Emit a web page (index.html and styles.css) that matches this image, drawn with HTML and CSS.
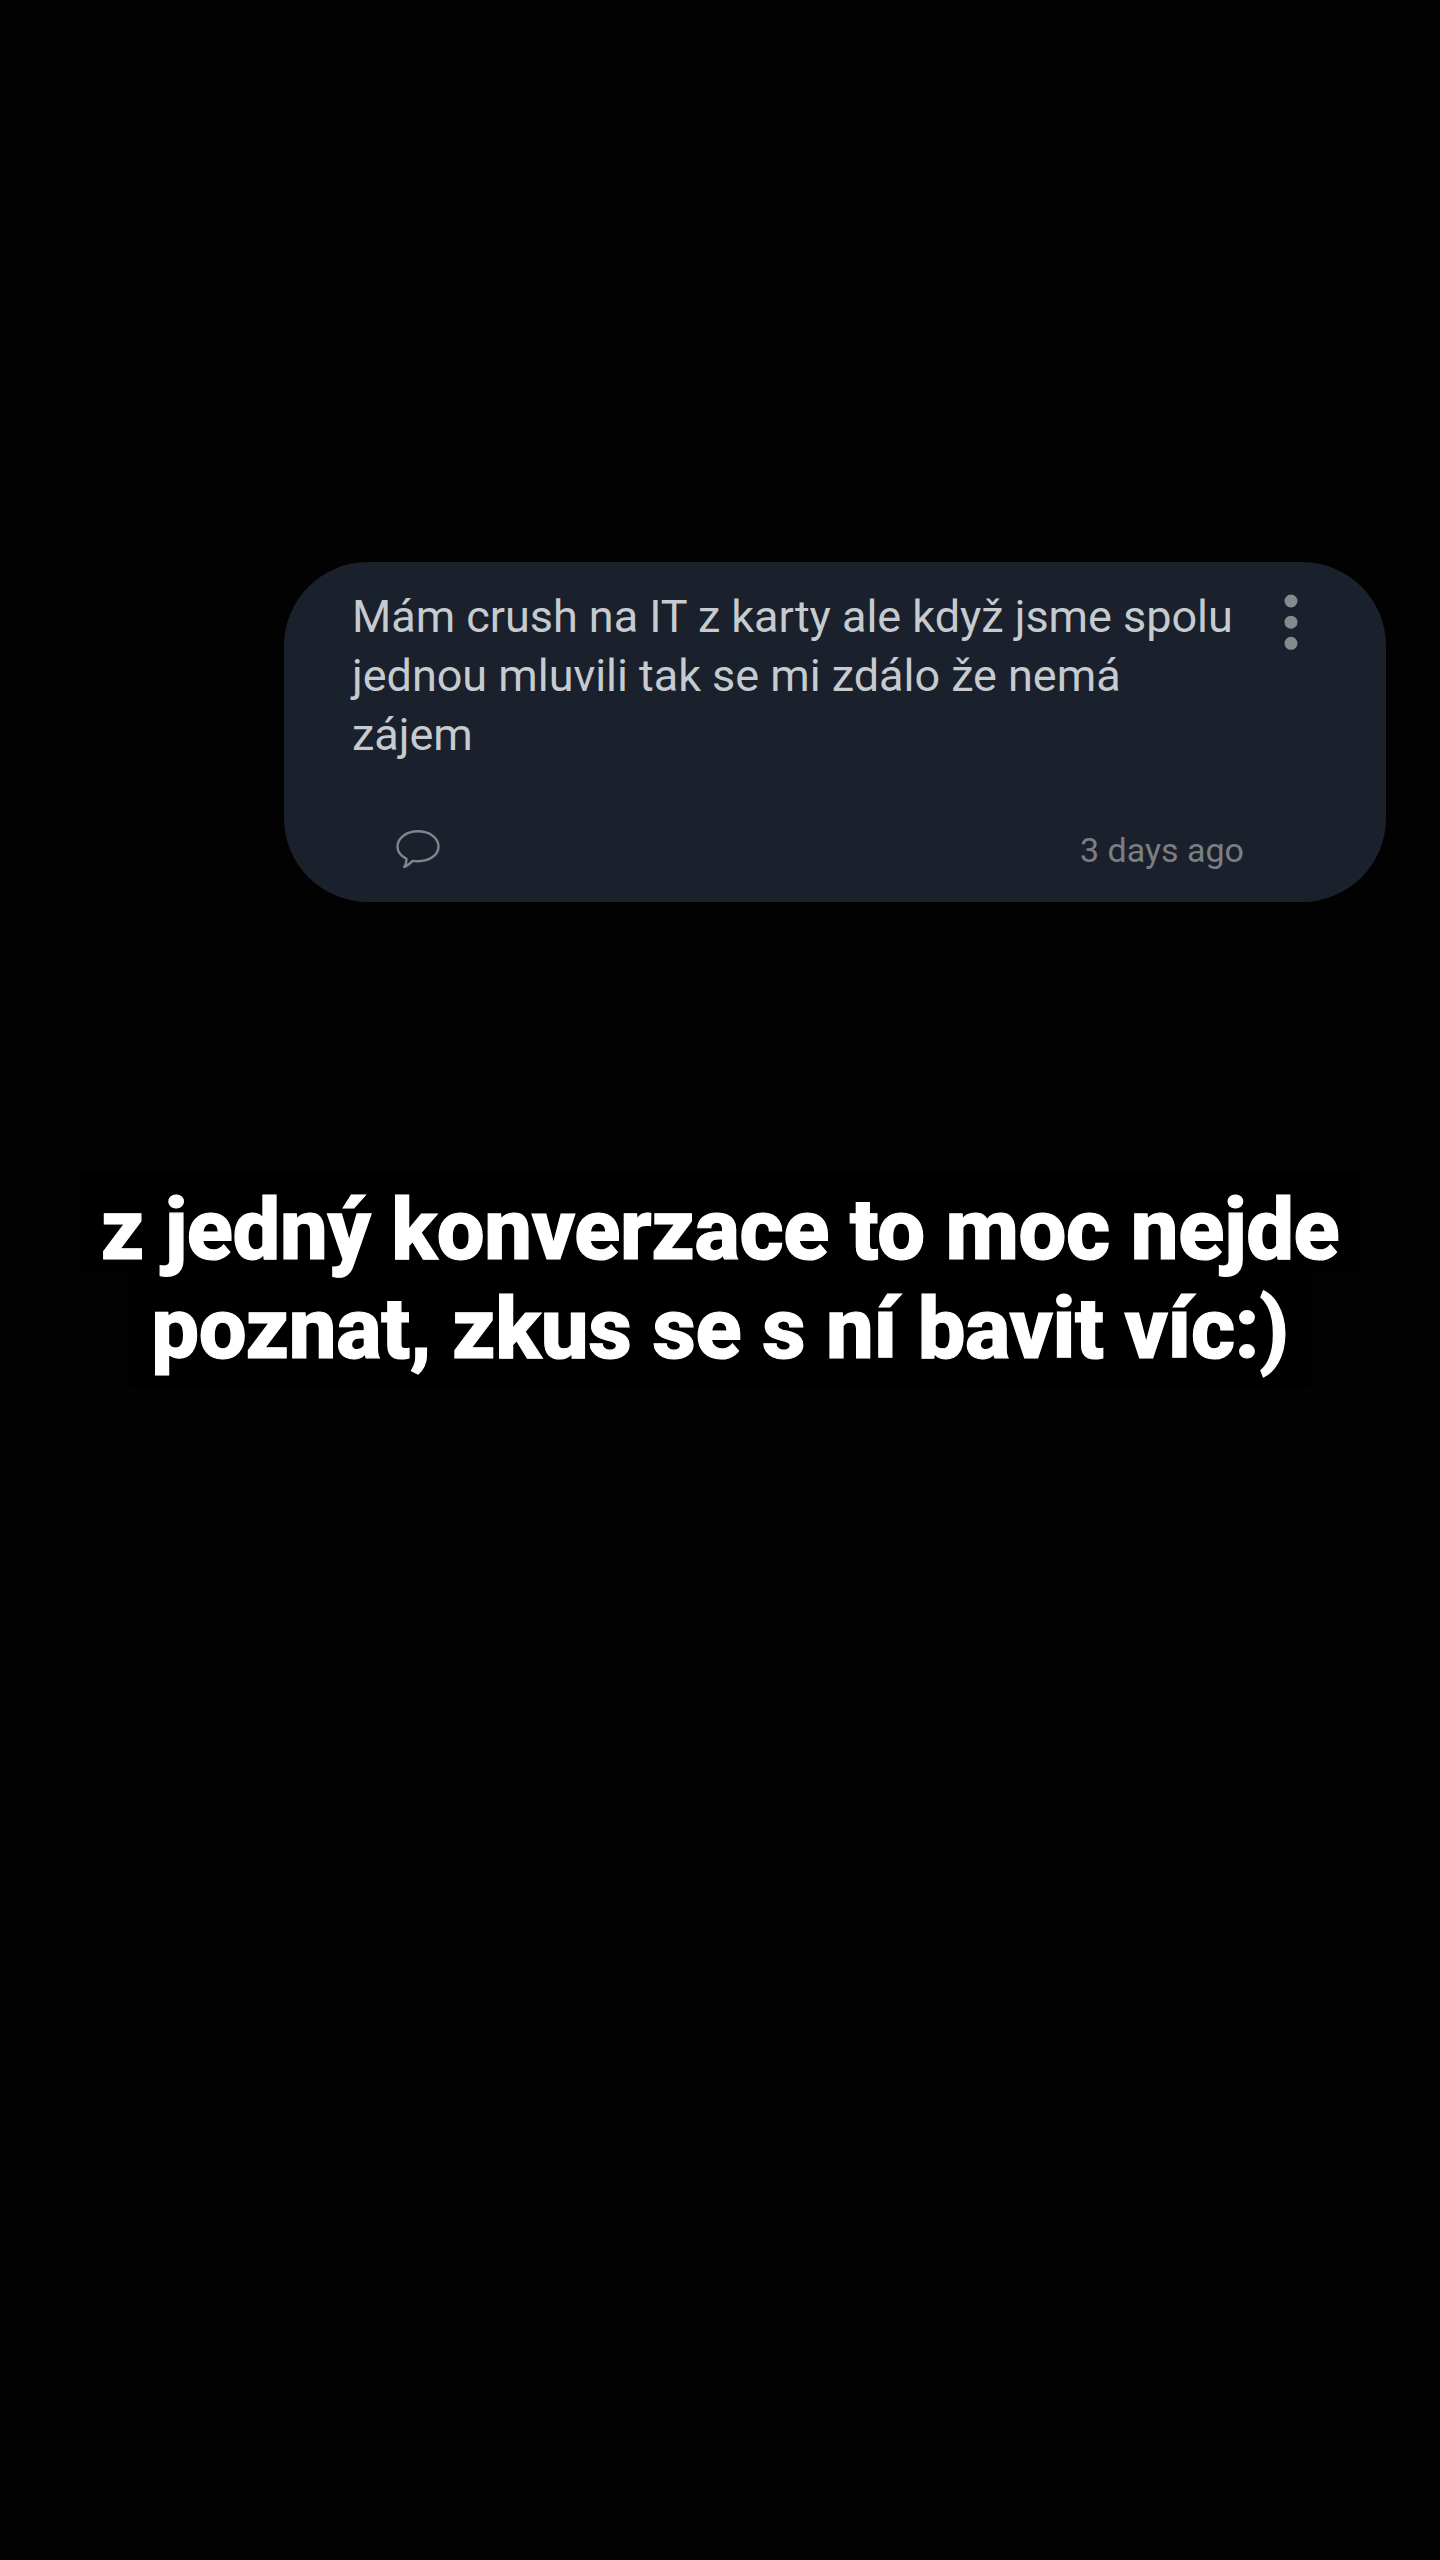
FILE: index.html
```html
<!DOCTYPE html>
<html lang="cs">
<head>
<meta charset="utf-8">
<title>Story</title>
<link rel="stylesheet" href="styles.css">
</head>
<body>
<main class="story">
  <article class="card">
    <div class="card-top">
      <p class="message">Mám crush na IT z karty ale když jsme spolu<br>jednou mluvili tak se mi zdálo že nemá<br>zájem</p>
      <svg class="more" width="14" height="56" viewBox="0 0 14 56" fill="#858a8d">
        <circle cx="7" cy="7" r="6.5"/><circle cx="7" cy="28.2" r="6.5"/><circle cx="7" cy="49.3" r="6.5"/>
      </svg>
    </div>
    <footer class="card-bottom">
      <svg class="comment" width="44" height="40" viewBox="0 0 44 40" fill="none" stroke="#80858b" stroke-width="2.4" stroke-linejoin="round">
        <path d="M10.5 28.8C4.800 26 1.500 21.500 1.500 16.500C1.500 8 10.500 1.300 22 1.300S42.500 8 42.500 16.500S33.500 31.200 22 31.200Q19 31.200 16.500 30.900C14 33.500 11.500 36 8.300 37C10 34.500 10.600 31.500 10.500 28.800Z"/>
      </svg>
      <time class="age">3 days ago</time>
    </footer>
  </article>
  <div class="reply">
    <p class="reply-line">z jedný konverzace to moc nejde</p>
    <p class="reply-line">poznat, zkus se s ní bavit víc:)</p>
  </div>
</main>
</body>
</html>
```
FILE: styles.css
```css
* { box-sizing: border-box; }
body { margin: 0; background: #020203; font-family: Roboto, sans-serif; }
p { margin: 0; }
svg { display: block; flex: none; }
.story { display: flex; flex-direction: column; align-items: center; height: 2560px; padding-top: 562px; }
.card {
  display: flex; flex-direction: column; justify-content: space-between;
  align-self: flex-start; width: 1102px; height: 340px; margin-left: 284px;
  padding: 25px 88px 30px 67px; border-radius: 84px; background: #1b212c; color: #c6cbd0;
}
.card-top { display: flex; justify-content: space-between; }
.message { padding-left: 1px; font-size: 45px; line-height: 59px; letter-spacing: -0.03px; white-space: nowrap; }
.more { margin-top: 7px; }
.card-bottom { display: flex; justify-content: space-between; align-items: center; padding: 0 54px 0 45px; }
.age { font-size: 34px; line-height: 44px; color: #7b7f84; white-space: nowrap; }
.reply { display: flex; flex-direction: column; align-items: center; margin-top: 270px; }
.reply-line {
  position: relative; z-index: 1; height: 99px; padding: 0 22px; background: #000; color: #fff;
  font-size: 85px; font-weight: 800; line-height: 116px; letter-spacing: -0.38px; white-space: nowrap;
  -webkit-text-stroke: 1.2px #fff;
}
.reply-line:last-child { z-index: 0; height: 116px; }
```
